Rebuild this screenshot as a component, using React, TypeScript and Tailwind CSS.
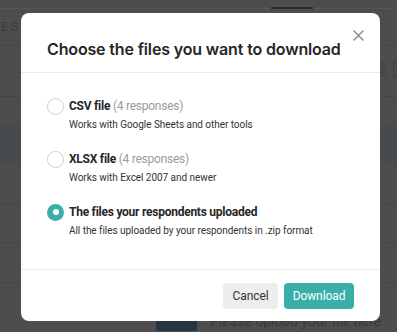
import { useState } from 'react';

const options = [
  { id: 'csv', label: 'CSV file', count: '(4 responses)', description: 'Works with Google Sheets and other tools' },
  { id: 'xlsx', label: 'XLSX file', count: '(4 responses)', description: 'Works with Excel 2007 and newer' },
  { id: 'uploads', label: 'The files your respondents uploaded', count: '', description: 'All the files uploaded by your respondents in .zip format' },
];

function Radio({ checked }: { checked: boolean }) {
  if (checked) {
    return (
      <span className="flex h-[17px] w-[17px] shrink-0 items-center justify-center rounded-full bg-[#3aafa9]">
        <span className="h-[6px] w-[6px] rounded-full bg-white" />
      </span>
    );
  }
  return <span className="h-[17px] w-[17px] shrink-0 rounded-full border border-[#cfcfcf] bg-white" />;
}

function Backdrop() {
  // page behind the dialog, already dimmed by the overlay
  return (
    <div className="absolute inset-0 flex flex-col bg-[#4d4d4d]">
      <div className="flex h-[9px] border-b border-[#555555]">
        <div className="ml-[271px] mt-[7px] h-[2px] w-[42px] bg-[#2a2a2a]" />
      </div>
      <div className="flex h-[37px] items-center border-b border-[#464646] pl-[1px]">
        <span className="text-[13px] tracking-[2px] text-[#3c3c3c]">ES [</span>
      </div>
      <div className="flex h-[52px] items-start justify-end gap-[7px] border-b border-[#464646] pt-[15px]">
        <div className="h-[16px] w-[40px] rounded-[3px] bg-[#484848]" />
        <div className="h-[16px] w-[4px] rounded-l-[3px] border border-r-0 border-[#404040]" />
      </div>
      <div className="h-[28px]" />
      <div className="h-[41px] bg-[#474b4d]" />
      <div className="h-[39px] border-b border-[#464646]" />
      <div className="h-[40px] border-b border-[#464646]" />
      <div className="h-[40px] border-b border-[#464646]" />
      <div className="flex items-start gap-[13px] pl-[156px] pt-[28px]">
        <div className="h-[20px] w-[41px] rounded-[3px] bg-[#263341]" />
        <span className="text-[14px] text-[#3a3a3a]">Please upload your file here</span>
      </div>
    </div>
  );
}

export default function App() {
  const [selected, setSelected] = useState('uploads');

  return (
    <div className="relative h-[332px] w-[397px] overflow-hidden [font-family:Roboto,'Noto_Sans',sans-serif]">
      <Backdrop />

      <div className="absolute inset-0 pl-[21px] pt-[13px]">
        <div className="relative flex h-[308px] w-[359px] flex-col rounded-[8px] bg-white">
          {/* Header */}
          <div className="h-[60px] border-b border-[#ebebeb] px-[26px] pt-[24px]">
            <h2 className="text-[16px] leading-[24px] font-semibold tracking-[-0.15px] text-[#262626] [font-family:Inter,sans-serif]">
              Choose the files you want to download
            </h2>
          </div>
          <button className="absolute right-[16px] top-[17px] text-[#8c8c8c]" aria-label="Close">
            <svg width="11" height="11" viewBox="0 0 11 11" fill="none" stroke="currentColor" strokeWidth="1.5" strokeLinecap="round">
              <path d="M1 1l9 9M10 1l-9 9" />
            </svg>
          </button>

          {/* Options */}
          <div className="flex flex-1 flex-col gap-[18px] px-[26px] pt-[24px]">
            {options.map(o => (
              <label key={o.id} className="flex cursor-pointer flex-col" onClick={() => setSelected(o.id)}>
                <div className="flex h-[18px] items-center gap-[5px]">
                  <Radio checked={selected === o.id} />
                  <span className="whitespace-nowrap text-[12px] font-bold tracking-[-0.25px] text-[#262626]">
                    {o.label}
                    {o.count && <span className="font-normal text-[#9b9b9b]"> {o.count}</span>}
                  </span>
                </div>
                <p className="mt-[3px] whitespace-nowrap pl-[22px] text-[10px] leading-[14px] tracking-[-0.05px] text-[#333333]">
                  {o.description}
                </p>
              </label>
            ))}
          </div>

          {/* Footer */}
          <div className="flex justify-end gap-[6px] border-t border-[#ebebeb] px-[26px] pb-[12px] pt-[13px]">
            <button className="h-[26px] w-[55px] rounded-[4px] bg-[#ededed] text-[12px] tracking-[-0.1px] text-[#333333]">Cancel</button>
            <button className="h-[26px] w-[70px] rounded-[4px] bg-[#3aafa9] text-[12px] tracking-[-0.1px] text-white">Download</button>
          </div>
        </div>
      </div>
    </div>
  );
}
